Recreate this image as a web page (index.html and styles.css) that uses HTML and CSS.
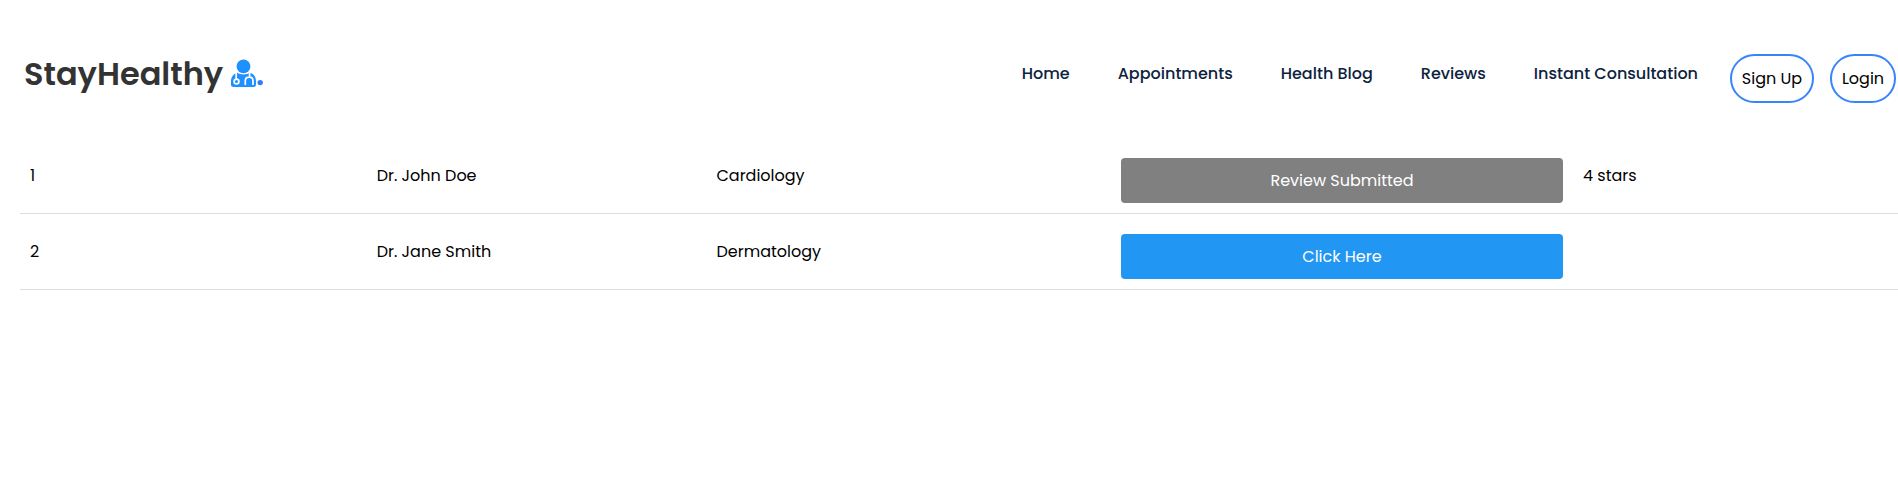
FILE: index.html
```html
<!DOCTYPE html>
<html lang="en">
<head>
<meta charset="utf-8">
<title>StayHealthy</title>
<link rel="stylesheet" href="styles.css">
</head>
<body>
<nav class="navbar">
  <a class="logo"><span class="logo-text">StayHealthy</span>
    <svg class="logo-icon" viewBox="0 0 32 30" aria-hidden="true">
      <circle cx="13.5" cy="8.4" r="6.9" fill="#1e90ff"/>
      <path d="M7.5 14.8C10 17 17.5 17 19.5 14.8C24 15.6 26 19 26 23.5V26.5Q26 29 23.5 29H3.6Q1 29 1 26.5V23.5C1 19 3.5 15.6 7.5 14.8Z" fill="#1e90ff"/>
      <path d="M6.2 14.8V21M19.6 14.8V18.8M15.3 27V22.8Q15.3 19.2 19.2 19.2Q23 19.2 23 22.8V27" fill="none" stroke="#fff" stroke-width="1.7"/>
      <circle cx="6.5" cy="23.5" r="2.4" fill="#1e90ff" stroke="#fff" stroke-width="1.7"/>
      <circle cx="30.2" cy="24.6" r="2.7" fill="#2d7ff9"/>
    </svg>
  </a>
  <div class="nav-links">
    <a class="nav-link">Home</a>
    <a class="nav-link">Appointments</a>
    <a class="nav-link">Health Blog</a>
    <a class="nav-link">Reviews</a>
    <a class="nav-link">Instant Consultation</a>
  </div>
  <div class="auth">
    <button class="btn signup">Sign Up</button>
    <button class="btn login">Login</button>
  </div>
</nav>
<main class="reviews-table">
  <div class="row">
    <span>1</span><span>Dr. John Doe</span><span>Cardiology</span>
    <button class="review-btn submitted">Review Submitted</button><span>4 stars</span>
  </div>
  <div class="row">
    <span>2</span><span>Dr. Jane Smith</span><span>Dermatology</span>
    <button class="review-btn">Click Here</button><span></span>
  </div>
</main>
</body>
</html>
```
FILE: styles.css
```css
* { box-sizing: border-box; }
body {
  margin: 0;
  background: #fff;
  color: #000;
  font-family: Poppins, Inter, sans-serif;
  font-size: 16px;
  line-height: 24px;
  overflow: hidden;
}
.navbar {
  display: flex;
  align-items: flex-start;
  height: 138px;
  padding: 54px 2px 0 24px;
}
.logo { display: flex; margin-right: auto; color: #333; }
.logo-text { font-size: 32px; font-weight: 600; line-height: 40px; width: 205px; white-space: nowrap; }
.logo-icon { width: 32px; height: 30px; margin-top: 4px; margin-left: 1px; overflow: visible; }
.nav-links { display: flex; gap: 48px; padding-top: 8px; margin-right: 32px; }
.nav-link { color: #0c2340; font-weight: 500; white-space: nowrap; }
.auth { display: flex; gap: 16px; }
.btn {
  height: 49px;
  padding: 0;
  border: 2px solid #3685fb;
  border-radius: 25px;
  background: #fff;
  color: #000;
  font: inherit;
}
.signup { width: 84px; }
.login { width: 66px; }
.reviews-table { padding-left: 20px; }
.row {
  display: grid;
  grid-template-columns: 346.7px 339.8px 404.5px 462px 1fr;
  align-items: center;
  height: 76px;
  border-bottom: 1px solid #ddd;
}
.row span { padding-left: 10px; white-space: nowrap; }
.review-btn {
  height: 45px;
  margin: 10px 10px 0;
  border: 0;
  border-radius: 4px;
  background: #2196f3;
  color: #fff;
  font: inherit;
}
.submitted { background: #808080; }
```
